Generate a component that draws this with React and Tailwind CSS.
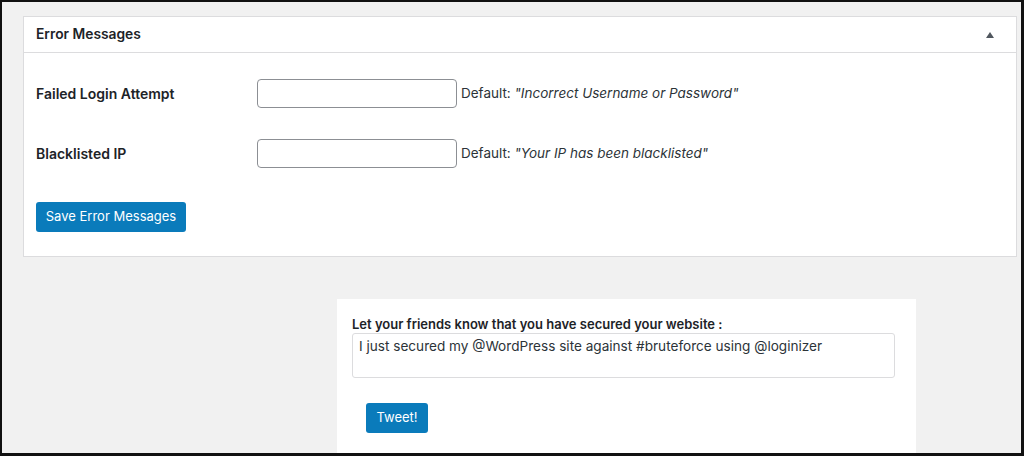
export default function App() {
  const rows = [
    { label: "Failed Login Attempt", def: "\"Incorrect Username or Password\"" },
    { label: "Blacklisted IP", def: "\"Your IP has been blacklisted\"" },
  ];

  return (
    <div
      className="h-[456px] w-[1024px] overflow-hidden border-t-2 border-l-2 border-r-[3px] border-b-[3px] border-[#111] bg-[#f1f1f1] pl-[21px] pr-[4px] pt-[14px] text-[#1d2327]"
      style={{ fontFamily: "Inter, 'Liberation Sans', sans-serif" }}
    >
      {/* Error Messages panel */}
      <div className="border border-[#dcdcde] bg-white">
        <div className="flex h-[36px] items-center justify-between border-b border-[#dcdcde] pl-[12px] pr-[22px]">
          <h2 className="text-[13.8px] font-semibold">Error Messages</h2>
          <svg width="8" height="6" viewBox="0 0 8 6" className="mt-[1px]">
            <path d="M4 0 L8 6 L0 6 Z" fill="#50575e" />
          </svg>
        </div>
        <div className="px-[12px] pt-[26px] pb-[24px]">
          <div className="flex flex-col gap-[31px]">
            {rows.map(r => (
              <div key={r.label} className="flex items-center">
                <label className="w-[221px] text-[14px] font-semibold">{r.label}</label>
                <input
                  type="text"
                  className="h-[29px] w-[200px] rounded-[4px] border border-[#8c8f94] bg-white px-2 text-[14px] outline-none"
                />
                <span className="ml-[4px] text-[13.5px] text-[#2c3338]">
                  Default: <em>{r.def}</em>
                </span>
              </div>
            ))}
          </div>
          <button className="mt-[34px] h-[30px] w-[150px] rounded-[3px] bg-[#0a7bbb] text-[13px] text-white">
            Save Error Messages
          </button>
        </div>
      </div>

      {/* Tweet box */}
      <div className="ml-[314px] mt-[42px] h-[200px] w-[579px] bg-white px-[15px] pt-[16px]">
        <label className="block text-[13px] leading-[18px] font-semibold text-[#1d2327]">
          Let your friends know that you have secured your website :
        </label>
        <textarea
          className="block h-[45px] w-[543px] resize-none rounded-[3px] border border-[#dcdcde] px-[6px] py-[2px] text-[13.6px] leading-[21px] text-[#2c3338] outline-none"
          defaultValue="I just secured my @WordPress site against #bruteforce using @loginizer"
        />
        <button className="ml-[14px] mt-[25px] h-[30px] w-[62px] rounded-[3px] bg-[#0a7bbb] text-[13px] text-white">
          Tweet!
        </button>
      </div>
    </div>
  );
}
